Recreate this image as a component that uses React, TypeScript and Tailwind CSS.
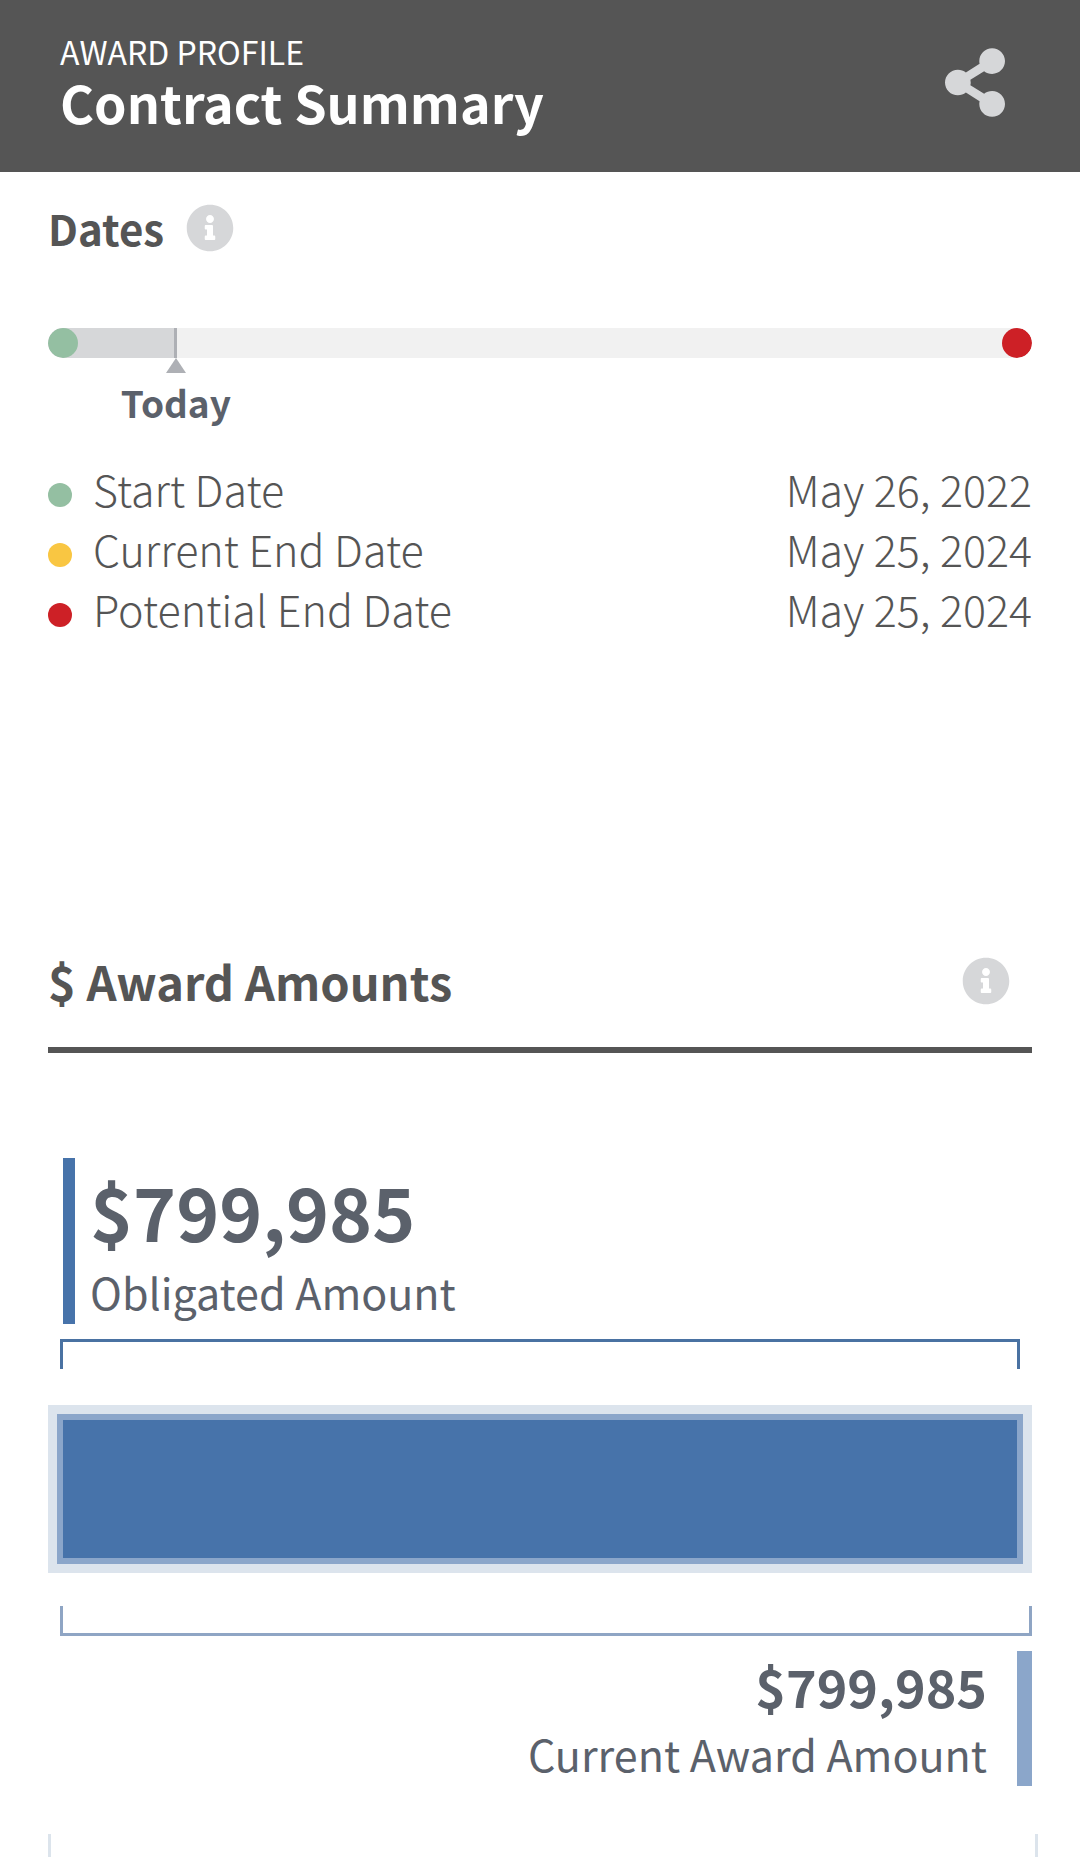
import { FaInfoCircle, FaShareAlt } from 'react-icons/fa';

const progress = 13;

const dates = [
  { label: 'Start Date', value: 'May 26, 2022', dot: 'bg-[#94bfa2]' },
  { label: 'Current End Date', value: 'May 25, 2024', dot: 'bg-[#f9c642]' },
  { label: 'Potential End Date', value: 'May 25, 2024', dot: 'bg-[#cd2026]' },
];

function InfoButton({ label }: { label: string }) {
  return (
    <button type="button" aria-label={label} className="text-[#d6d7d9]">
      <FaInfoCircle className="size-12" />
    </button>
  );
}

export default function App() {
  return (
    <div className="bg-white text-[#555] font-['Noto_Sans_CJK_SC','Noto_Sans',sans-serif]">

      {/* HEADER */}
      <header className="bg-[#555] text-white flex items-center justify-between pl-[60px] pr-[75px] pt-[31px] pb-[39px]">
        <div>
          <p className="text-[32px] leading-[40px]">AWARD PROFILE</p>
          <h1 className="text-[52px] leading-[62px] font-semibold">Contract Summary</h1>
        </div>
        <button type="button" aria-label="Share" className="text-[#d6d7d9]">
          <FaShareAlt className="h-[69px] w-[60px]" />
        </button>
      </header>

      <main className="px-12">

        {/* DATES */}
        <section className="pt-[31px]">
          <div className="flex items-center gap-[22px]">
            <h2 className="text-[42px] leading-[50px] font-semibold">Dates</h2>
            <InfoButton label="About dates" />
          </div>

          <div className="relative mt-[75px] h-[30px] overflow-hidden rounded-full bg-[#f1f1f1]">
            <div className="h-full bg-[#d6d7d9]" style={{ width: `${progress}%` }} />
            <div className="absolute top-0 -ml-0.5 h-full w-[3px] bg-[#aeb0b5]" style={{ left: `${progress}%` }} />
            <span className="absolute left-0 top-0 size-[30px] rounded-full bg-[#94bfa2]" />
            <span className="absolute right-0 top-0 size-[30px] rounded-full bg-[#cd2026]" />
          </div>
          <div className="flex w-0 flex-col items-center" style={{ marginLeft: `${progress}%` }}>
            <svg viewBox="0 0 20 15" className="h-[15px] w-5 shrink-0 fill-[#aeb0b5]">
              <path d="M10 0 20 15H0z" />
            </svg>
            <span className="mt-[7px] text-[37px] leading-[44px] font-semibold text-[#5b616b]">Today</span>
          </div>

          <ul className="mt-[34px] text-[43px] leading-[60px] font-light">
            {dates.map((date) => (
              <li key={date.label} className="flex items-center">
                <span className={`mt-3.5 mr-[21px] size-6 rounded-full ${date.dot}`} />
                <span>{date.label}</span>
                <span className="ml-auto">{date.value}</span>
              </li>
            ))}
          </ul>
        </section>

        {/* AWARD AMOUNTS */}
        <section className="mt-[314px]">
          <div className="flex items-center justify-between border-b-6 border-[#555] pr-[22px] pb-[38px]">
            <h2 className="text-[47px] leading-[57px] font-semibold">$ Award Amounts</h2>
            <InfoButton label="About award amounts" />
          </div>

          <div className="mt-[105px] ml-[15px] border-l-12 border-[#4773aa] pt-1 pl-[15px] text-[#5b616b]">
            <p className="text-[73px] leading-[96px] font-semibold">$799,985</p>
            <p className="text-[43px] leading-[66px]">Obligated Amount</p>
          </div>
          <div className="mt-[15px] mx-3 h-[30px] border-3 border-b-0 border-[#4a72a2]" />

          <div className="mt-9 h-[168px] border-9 border-[#dce4ed] bg-[#4773aa]">
            <div className="h-full border-6 border-[#8ba6ca]" />
          </div>

          <div className="mt-[33px] ml-3 h-[30px] border-3 border-t-0 border-[#8fa5c4]" />
          <div className="mt-[15px] border-r-15 border-[#8ba6ca] pr-[30px] text-right text-[#5b616b]">
            <p className="text-[52px] leading-[70px] font-semibold">$799,985</p>
            <p className="text-[43px] leading-[65px]">Current Award Amount</p>
          </div>
          <div className="mt-12 -mr-1.5 h-[23px] border-x-3 border-[#dce4ec]" />
        </section>

      </main>
    </div>
  );
}
